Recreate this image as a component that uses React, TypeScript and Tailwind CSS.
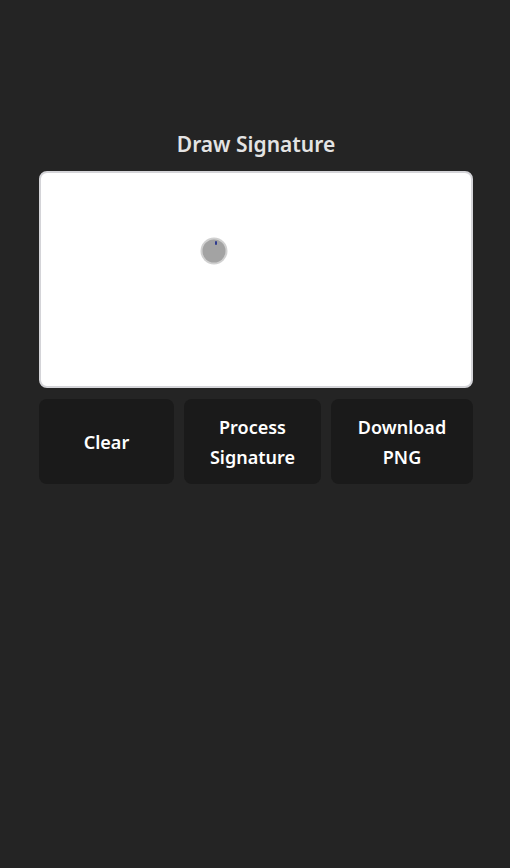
export default function App() {
  return (
    <div
      className="min-h-screen bg-[#242424] text-[rgba(255,255,255,0.87)]"
      style={{ fontFamily: '"Noto Sans", "Open Sans", sans-serif' }}
    >
      <div className="flex flex-col pl-[39px] pr-[37px] pt-[129px]">
        <h2 className="text-center text-[21px] leading-[30px] font-semibold text-[#e3e3e3]">
          Draw Signature
        </h2>

        <div className="relative mt-[12px] h-[217px] rounded-[8px] border-2 border-[#d4d4d8] bg-white">
          {/* pointer indicator */}
          <svg
            className="absolute left-[158px] top-[63px]"
            width="30"
            height="30"
            viewBox="0 0 30 30"
          >
            <circle cx="15" cy="15" r="13.5" fill="#d0d0d0" />
            <circle cx="15" cy="15" r="11.5" fill="#a3a3a3" />
            <rect x="16" y="5" width="2" height="4" rx="1" fill="#2f3b8f" />
          </svg>
        </div>

        <div className="mt-[11px] grid grid-cols-[135fr_137fr_142fr] gap-[10px]">
          <button className="h-[85px] rounded-[8px] bg-[#1a1a1a] px-4 text-[18px] leading-[30px] font-semibold text-white">
            Clear
          </button>
          <button className="h-[85px] rounded-[8px] bg-[#1a1a1a] px-4 text-[18px] leading-[30px] font-semibold text-white">
            Process
            <br />
            Signature
          </button>
          <button className="h-[85px] rounded-[8px] bg-[#1a1a1a] px-4 text-[18px] leading-[30px] font-semibold text-white">
            Download
            <br />
            PNG
          </button>
        </div>
      </div>
    </div>
  );
}
